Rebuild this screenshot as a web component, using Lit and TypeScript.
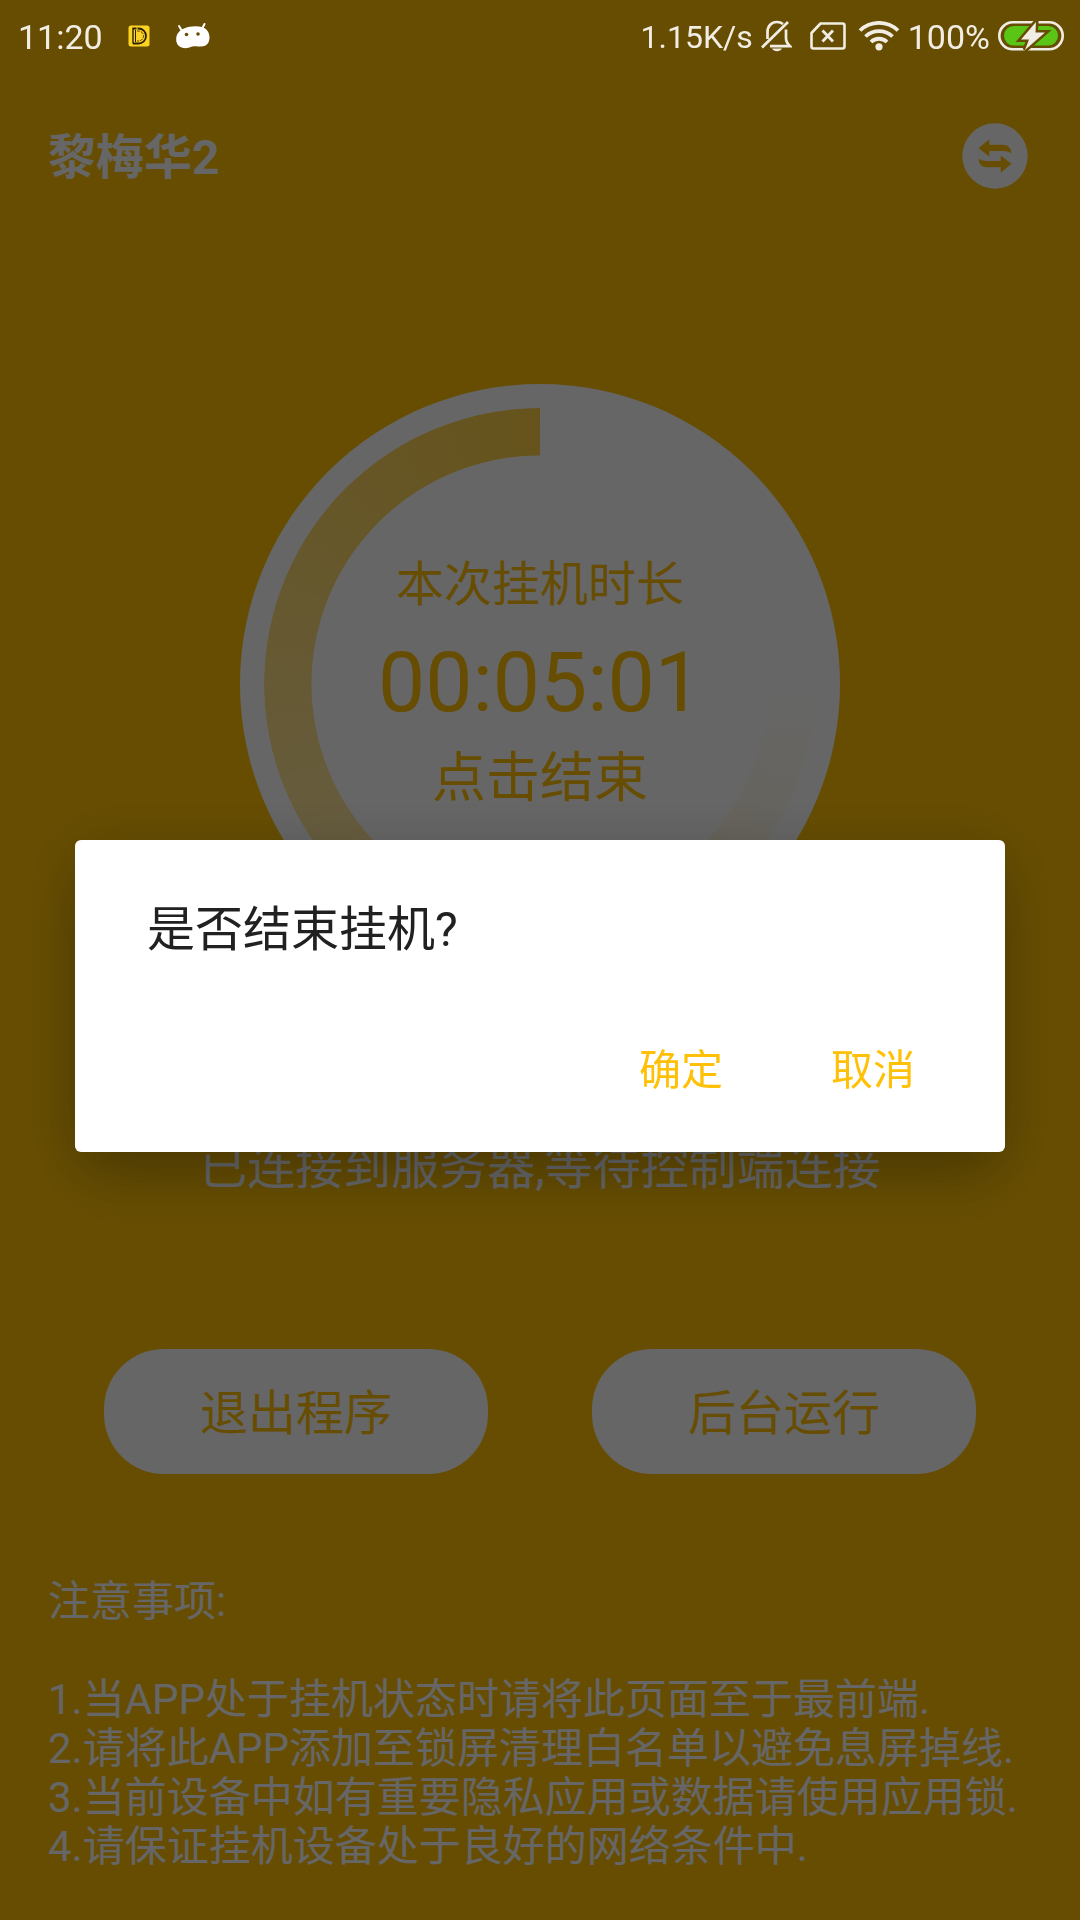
import { LitElement, html, css, svg } from "lit";
import { customElement, state } from "lit/decorators.js";

const NOTES = [
  "1.当APP处于挂机状态时请将此页面至于最前端.",
  "2.请将此APP添加至锁屏清理白名单以避免息屏掉线.",
  "3.当前设备中如有重要隐私应用或数据请使用应用锁.",
  "4.请保证挂机设备处于良好的网络条件中.",
];

const BOLT = "M38 1 23 18.5h8L27 29 47 11.5h-9.500z";
const SWAP_ARROW =
  "M16.500 25.300 27.300 16.300v5.400h13.500c5 0 8.500 3 8.500 8.800-2.500-1.800-5-2.500-8-2.500h-14v5.400z";

@customElement("status-bar")
export class StatusBar extends LitElement {
  static styles = css`
    :host {
      display: flex;
      align-items: center;
      height: 72px;
      padding: 0 16px 0 18px;
      box-sizing: border-box;
      color: #f2ede4;
      font: 400 34px/40px Roboto, "Noto Sans CJK SC", sans-serif;
    }
    svg {
      display: block;
      flex: none;
    }
    span {
      padding-top: 2px;
    }
    .left,
    .right {
      display: flex;
      align-items: center;
    }
    .left {
      gap: 25px;
    }
    .right {
      margin-left: auto;
      gap: 8px;
    }
    .speed {
      font-size: 32px;
    }
    .sim {
      margin: 0 4px 0 10px;
    }
  `;

  render() {
    return html`
      <div class="left">
        <span>11:20</span>
        <svg width="22" height="22" viewBox="0 0 22 22" aria-hidden="true">
          <rect width="21" height="21" x=".5" y=".5" rx="2.500" fill="#fdd323" />
          <path d="M4.500 3.500h6a7.500 7.500 0 0 1 0 15h-6" fill="none" stroke="#2b2008" stroke-width="1.800" stroke-dasharray="4 1 30" />
          <path d="M5 3.500v15" stroke="#2b2008" stroke-width="1.400" />
          <path d="M7.500 5v12" stroke="#2b2008" stroke-width="1" />
          <path d="M9 6h1.500a5 5 0 0 1 0 10H9" fill="none" stroke="#2b2008" stroke-width=".8" stroke-dasharray="3 1" />
        </svg>
        <svg width="36" height="28" viewBox="0 0 36 28" aria-hidden="true">
          <path d="m4 4 3 5M29.500 2 27 7" stroke="#fff" stroke-width="2" stroke-linecap="round" />
          <path
            d="M9 6.500C14 4 22 3.500 27 5c4.500 1.500 7.500 5 7.500 10.500 0 6-3.500 9-8.500 9-4 0-6.500-.8-9.500.3-2.500.9-5 1.700-8 1.200C3 25 1 21 1.200 17 1.400 12 4 8.500 9 6.500z"
            fill="#fff"
          />
          <circle cx="11.500" cy="12.500" r="1.800" fill="#664d03" />
          <circle cx="23" cy="12" r="1.800" fill="#664d03" />
        </svg>
      </div>
      <div class="right">
        <span class="speed">1.15K/s</span>
        <svg width="31" height="32" viewBox="0 0 31 32" aria-hidden="true">
          <g fill="none" stroke="#f2ede4" stroke-width="2.700">
            <path d="M6.500 19v-7C6.500 6 10.500 2 16 2c2.500 0 4.500.8 6 2M25 9.500V18c0 3 1.500 6 4 8.200H9" />
            <path d="M1 27.500 27 2" />
          </g>
          <path d="M11 28.500h10c-1 1.800-2.800 2.700-5 2.700s-4-.9-5-2.700z" fill="#f2ede4" />
        </svg>
        <svg class="sim" width="36" height="28" viewBox="0 0 36 28" aria-hidden="true">
          <path d="M10.500 1.500h22a2 2 0 0 1 2 2v21a2 2 0 0 1-2 2h-29a2 2 0 0 1-2-2V11z" fill="none" stroke="#f2ede4" stroke-width="2.600" stroke-linejoin="round" />
          <path d="m12.500 8.500 10.500 11m0-11-10.500 11" stroke="#f2ede4" stroke-width="2.800" />
        </svg>
        <svg width="42" height="30" viewBox="0 0 42 30" aria-hidden="true">
          <g fill="none" stroke="#f2ede4" stroke-width="3.800">
            <path d="M2 9.500a27.500 27.500 0 0 1 38 0" />
            <path d="M7.500 15.500a19.500 19.500 0 0 1 27 0" />
            <path d="M13 21a11.500 11.500 0 0 1 16 0" />
          </g>
          <circle cx="21" cy="25.800" r="3.600" fill="#f2ede4" />
        </svg>
        <span>100%</span>
        <svg width="66" height="30" viewBox="0 0 66 30" aria-hidden="true">
          <rect x="1.300" y="1.300" width="63.400" height="27" rx="13.500" fill="none" stroke="#f2ede4" stroke-width="2.600" />
          <rect x="6" y="5" width="54" height="19.500" rx="9.700" fill="#5ac514" />
          <path d=${BOLT} fill="#664d03" stroke="#664d03" stroke-width="5" />
          <path d=${BOLT} fill="#f2ede4" />
        </svg>
      </div>
    `;
  }
}

@customElement("app-root")
export class AppRoot extends LitElement {
  static styles = css`
    :host {
      display: block;
      position: relative;
      min-height: 100vh;
      background: #ffc107;
      color: #fff;
      font: 400 48px/56px Roboto, "Noto Sans CJK SC", sans-serif;
    }
    button {
      margin: 0;
      padding: 0;
      border: 0;
      background: none;
      color: #ffc107;
      font: inherit;
      cursor: pointer;
    }
    .status {
      position: fixed;
      inset: 0 0 auto;
      z-index: 2;
    }
    .page {
      display: flex;
      flex-direction: column;
      padding-top: 72px;
    }
    .header {
      display: flex;
      align-items: center;
      justify-content: space-between;
      height: 168px;
      padding: 0 52px 0 48px;
    }
    .name {
      margin: 0;
      padding-top: 4px;
      font-size: 48px;
      font-weight: 700;
    }
    .swap svg {
      display: block;
    }
    .timer {
      display: grid;
      place-items: center;
      align-self: center;
      width: 600px;
      height: 600px;
      margin-top: 144px;
      border-radius: 50%;
      background: #fff;
    }
    .timer > * {
      grid-area: 1 / 1;
    }
    .ring {
      width: 552px;
      height: 552px;
      border-radius: 50%;
      background: conic-gradient(
        from 90deg,
        rgba(255, 193, 7, 0) 0deg,
        rgba(255, 193, 7, 0.75) 270deg,
        rgba(255, 193, 7, 0) 270deg
      );
      mask: radial-gradient(closest-side, transparent 228px, #000 229px);
    }
    .readout {
      display: flex;
      flex-direction: column;
      align-items: center;
    }
    .clock {
      margin-top: 6px;
      font-size: 84px;
      line-height: 128px;
    }
    .hint {
      font-size: 54px;
      line-height: 64px;
    }
    .server {
      margin: 156px 24px 0;
      text-align: center;
    }
    .choices {
      display: flex;
      justify-content: space-evenly;
      margin-top: 153px;
    }
    .pill {
      width: 384px;
      height: 125px;
      padding-top: 4px;
      border-radius: 60px;
      background: #fff;
    }
    .notes {
      margin-top: 103px;
      padding: 0 48px 48px;
      font-size: 42px;
      line-height: 49px;
    }
    .notes h2 {
      margin: 0 0 49px;
      font: inherit;
    }
    .notes p {
      margin: 0;
    }
    .scrim {
      position: fixed;
      inset: 0;
      z-index: 1;
      display: flex;
      align-items: center;
      padding: 72px 75px 0;
      background: rgba(0, 0, 0, 0.6);
    }
    .dialog {
      flex: 1;
      border-radius: 6px;
      background: #fff;
      box-shadow:
        0 36px 60px -8px rgba(0, 0, 0, 0.16),
        0 8px 60px rgba(0, 0, 0, 0.18);
    }
    .dialog h2 {
      margin: 0;
      padding: 62px 72px 59px;
      color: #212121;
      font: inherit;
    }
    .actions {
      display: flex;
      justify-content: flex-end;
      padding: 0 36px 27px;
    }
    .actions button {
      min-width: 192px;
      height: 108px;
      font-size: 42px;
    }
  `;

  @state() private asking = true;

  private close = () => {
    this.asking = false;
  };

  private ask = () => {
    this.asking = true;
  };

  render() {
    return html`
      <status-bar class="status"></status-bar>
      <main class="page">
        <header class="header">
          <h1 class="name">黎梅华2</h1>
          <button class="swap" aria-label="切换">
            <svg width="66" height="66" viewBox="0 0 66 66" aria-hidden="true">
              <circle cx="33" cy="33" r="32.700" fill="#fff" />
              ${[0, 180].map(
                (turn) => svg`<path d=${SWAP_ARROW} transform="rotate(${turn} 33 33)" fill="#ffc107" />`
              )}
            </svg>
          </button>
        </header>
        <button class="timer" @click=${this.ask}>
          <span class="ring"></span>
          <span class="readout">
            <span>本次挂机时长</span>
            <span class="clock">00:05:01</span>
            <span class="hint">点击结束</span>
          </span>
        </button>
        <p class="server">已连接到服务器,等待控制端连接</p>
        <div class="choices">
          <button class="pill">退出程序</button>
          <button class="pill">后台运行</button>
        </div>
        <section class="notes">
          <h2>注意事项:</h2>
          ${NOTES.map((note) => html`<p>${note}</p>`)}
        </section>
      </main>
      ${this.asking
        ? html`<div class="scrim">
            <div class="dialog" role="dialog" aria-modal="true" aria-labelledby="question">
              <h2 id="question">是否结束挂机?</h2>
              <div class="actions">
                <button @click=${this.close}>确定</button>
                <button @click=${this.close}>取消</button>
              </div>
            </div>
          </div>`
        : null}
    `;
  }
}
